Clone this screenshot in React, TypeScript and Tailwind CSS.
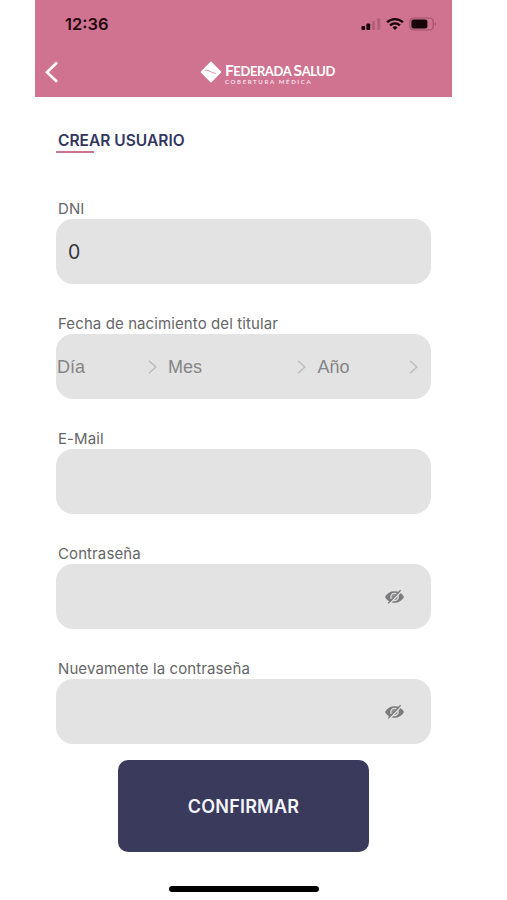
import { useState, type ReactNode } from "react";

const App = () => {
  return (
    <div className="h-[900px] w-[507px] overflow-hidden bg-white pl-[35px] font-['Inter',sans-serif]">
      <div className="flex h-full w-[417px] flex-col">
        <Header />
        <main className="flex flex-col px-[21px] pt-[34px]">
          <h1 className="h-[20px] pl-[2px] text-[15.5px] leading-[20px] font-semibold tracking-[0.02px] whitespace-nowrap text-[#33365f]">
            CREAR USUARIO
          </h1>
          <div className="h-[2px] w-[38px] bg-[#cf7391]" />

          <form
            className="mt-[46px] flex flex-col gap-[30px]"
            onSubmit={(e) => e.preventDefault()}
          >
            <Field label="DNI">
              <input
                aria-label="DNI"
                defaultValue="0"
                className="h-full w-full bg-transparent pt-px pl-[12px] text-[19.5px] text-[#343438] outline-none"
              />
            </Field>

            <Field label="Fecha de nacimiento del titular">
              <DatePart label="Día" width="w-[111px]" />
              <DatePart label="Mes" width="w-[149.5px]" />
              <DatePart label="Año" width="w-[112px]" />
            </Field>

            <Field label="E-Mail">
              <input
                aria-label="E-Mail"
                className="h-full w-full bg-transparent px-[12px] text-[19.5px] text-[#343438] outline-none"
              />
            </Field>

            <PasswordField label="Contraseña" />
            <PasswordField label="Nuevamente la contraseña" />

            <button
              type="submit"
              className="-mt-[14px] h-[92px] w-[251px] self-center rounded-[10px] bg-[#3a3a5d] pt-[2px] text-[18px] font-semibold tracking-[0.2px] text-[#f4f4fb]"
            >
              CONFIRMAR
            </button>
          </form>
        </main>
        <div className="mt-[34px] h-[6px] w-[150px] shrink-0 self-center rounded-full bg-black" />
      </div>
    </div>
  );
};

export default App;

function Header() {
  return (
    <header className="flex h-[96.5px] shrink-0 flex-col bg-[#cf7391]">
      <div className="flex h-[48px] items-center justify-between pr-[15px] pl-[30px]">
        <span className="text-[16.5px] font-semibold text-[#26060f]">
          12:36
        </span>
        <StatusIcons />
      </div>
      <div className="flex h-[48px] items-center">
        <svg
          width="14"
          height="22"
          viewBox="0 0 14 22"
          className="ml-[10px] shrink-0"
          fill="none"
          stroke="#fff"
          strokeWidth="2.6"
        >
          <path d="M12 1.5 2 11.2l10 9.6" />
        </svg>
        <Logo />
      </div>
    </header>
  );
}

function StatusIcons() {
  return (
    <div className="flex items-center">
      <svg width="20" height="14" viewBox="0 0 20 14">
        <rect x="0.5" y="9" width="3.6" height="4" rx="1" fill="#16040a" />
        <rect x="5.4" y="6.5" width="3.8" height="6.5" rx="1" fill="#16040a" />
        <rect x="11" y="4" width="3" height="9" rx="1" fill="#b45f7b" />
        <rect x="16.2" y="1.2" width="3" height="11.8" rx="1" fill="#b45f7b" />
      </svg>
      <svg
        width="18"
        height="14"
        viewBox="0 0 18 14"
        className="ml-[5px]"
        fill="none"
        stroke="#16040a"
        strokeWidth="2.3"
      >
        <path d="M1.1 5.3a11.3 11.3 0 0 1 15.8 0" />
        <path d="M4.1 8.4a7 7 0 0 1 9.8 0" />
        <path d="m9 13-2.5-2.6a3.6 3.6 0 0 1 5 0Z" fill="#16040a" stroke="none" />
      </svg>
      <svg width="28" height="14" viewBox="0 0 28 14" className="ml-[5px]">
        <rect
          x="0.8"
          y="1"
          width="23.4"
          height="12"
          rx="3.6"
          fill="none"
          stroke="#a2526d"
          strokeWidth="1.2"
        />
        <rect x="2.4" y="2.6" width="16" height="8.8" rx="2" fill="#16040a" />
        <path d="M25.8 5.2a2 2 0 0 1 0 3.6Z" fill="#a2526d" />
      </svg>
    </div>
  );
}

function Logo() {
  return (
    <div className="ml-[141px] flex items-center">
      <svg width="22" height="22" viewBox="0 0 22 22" className="shrink-0">
        <path
          d="M11 1.2 20.6 11 11 20.8 1.4 11Z"
          fill="#fff"
          stroke="#fff"
          strokeWidth="1.4"
          strokeLinejoin="round"
        />
        <path
          d="M4.8 9.4c2.6-.4 4 .2 5.600 1.100s3 1.600 5.400 2"
          fill="none"
          stroke="#cf7391"
          strokeWidth="0.8"
        />
      </svg>
      <div className="mt-[3px] ml-[3px] flex flex-col whitespace-nowrap text-white">
        <span className="h-[15px] font-['Lato',sans-serif] text-[13px] leading-[15px] font-bold tracking-[-0.42px]">
          <span className="text-[15.5px]">F</span>EDERADA{" "}
          <span className="text-[15.5px]">S</span>ALUD
        </span>
        <span className="mt-[1px] h-[6px] font-['Lato',sans-serif] text-[6px] leading-[6px] font-bold tracking-[1.65px] text-[#f8dfe8]">
          COBERTURA MÉDICA
        </span>
      </div>
    </div>
  );
}

function Field({ label, children }: { label: string; children: ReactNode }) {
  return (
    <div className="flex h-[85.1px] flex-col">
      <span className="h-[20px] pl-[2px] text-[15px] leading-[20px] tracking-[0.1px] whitespace-nowrap text-[#666668]">
        {label}
      </span>
      <div className="mt-[0.5px] flex h-[65px] shrink-0 items-center overflow-hidden rounded-[17px] bg-[#e3e3e3]">
        {children}
      </div>
    </div>
  );
}

function DatePart({ label, width }: { label: string; width: string }) {
  return (
    <div
      className={`flex shrink-0 items-center justify-between pr-[10.5px] pl-[1px] ${width}`}
    >
      <span className="pt-[2px] font-['Liberation_Sans',sans-serif] text-[18px] text-[#858585]">
        {label}
      </span>
      <svg
        width="9"
        height="14"
        viewBox="0 0 9 14"
        fill="none"
        stroke="#bcbcbc"
        strokeWidth="1.5"
      >
        <path d="m1 0.8 6.8 6.2L1 13.2" />
      </svg>
    </div>
  );
}

function PasswordField({ label }: { label: string }) {
  const [visible, setVisible] = useState(false);

  return (
    <Field label={label}>
      <input
        aria-label={label}
        type={visible ? "text" : "password"}
        className="h-full min-w-0 flex-1 bg-transparent px-[12px] text-[19.5px] text-[#343438] outline-none"
      />
      <button
        type="button"
        aria-label={label}
        className="mr-[27px]"
        onClick={() => setVisible(!visible)}
      >
        <svg width="19" height="16" viewBox="0 0 19 16">
          <path
            fill="#7b7b7d"
            d="M0 8c2-3.8 5.5-5.8 9.5-5.8S17 4.2 19 8c-2 3.8-5.5 5.8-9.5 5.8S2 11.8 0 8Z"
          />
          <circle
            cx="9.5"
            cy="8"
            r="3.7"
            fill="#939395"
            stroke="#dcdcdc"
            strokeWidth="1.3"
          />
          <path d="M4.3 15 16.800 2" stroke="#e3e3e3" strokeWidth="1.3" />
          <path d="M3.200 14.300 15.600 1.300" stroke="#7b7b7d" strokeWidth="1.3" />
        </svg>
      </button>
    </Field>
  );
}
